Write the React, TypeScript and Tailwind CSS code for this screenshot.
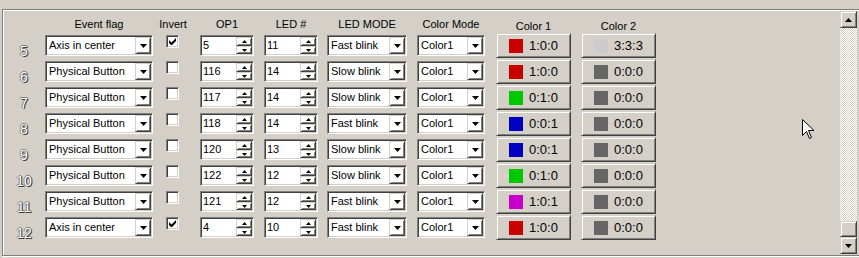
import React from 'react'

type Row = {
  n: number
  flag: string
  inv: boolean
  op1: string
  led: string
  mode: string
  c1: [string, string]
  c2: [string, string]
}

const RED = '#c80000'
const GRN = '#00c800'
const BLU = '#0000c0'
const MAG = '#c800c8'
const GRY = '#666666'

const rows: Row[] = [
  { n: 5, flag: 'Axis in center', inv: true, op1: '5', led: '11', mode: 'Fast blink', c1: [RED, '1:0:0'], c2: ['#cccccc', '3:3:3'] },
  { n: 6, flag: 'Physical Button', inv: false, op1: '116', led: '14', mode: 'Slow blink', c1: [RED, '1:0:0'], c2: [GRY, '0:0:0'] },
  { n: 7, flag: 'Physical Button', inv: false, op1: '117', led: '14', mode: 'Slow blink', c1: [GRN, '0:1:0'], c2: [GRY, '0:0:0'] },
  { n: 8, flag: 'Physical Button', inv: false, op1: '118', led: '14', mode: 'Fast blink', c1: [BLU, '0:0:1'], c2: [GRY, '0:0:0'] },
  { n: 9, flag: 'Physical Button', inv: false, op1: '120', led: '13', mode: 'Slow blink', c1: [BLU, '0:0:1'], c2: [GRY, '0:0:0'] },
  { n: 10, flag: 'Physical Button', inv: false, op1: '122', led: '12', mode: 'Slow blink', c1: [GRN, '0:1:0'], c2: [GRY, '0:0:0'] },
  { n: 11, flag: 'Physical Button', inv: false, op1: '121', led: '12', mode: 'Fast blink', c1: [MAG, '1:0:1'], c2: [GRY, '0:0:0'] },
  { n: 12, flag: 'Axis in center', inv: true, op1: '4', led: '10', mode: 'Fast blink', c1: [RED, '1:0:0'], c2: [GRY, '0:0:0'] },
]

const sunken =
  'border border-t-[#808080] border-l-[#808080] border-b-white border-r-white shadow-[inset_1px_1px_0_#404040,inset_-1px_-1px_0_#d4d0c8]'
const raised =
  'border border-t-[#d4d0c8] border-l-[#d4d0c8] border-b-[#404040] border-r-[#404040] shadow-[inset_1px_1px_0_#fff,inset_-1px_-1px_0_#808080]'

function Down() {
  return (
    <svg width="7" height="4" viewBox="0 0 7 4">
      <path d="M0 0h7L3.5 4z" fill="#000" />
    </svg>
  )
}

function Up() {
  return (
    <svg width="7" height="4" viewBox="0 0 7 4">
      <path d="M3.5 0L7 4H0z" fill="#000" />
    </svg>
  )
}

function Combo({ w, value }: { w: string; value: string }) {
  return (
    <div className={`${sunken} ${w} h-[21px] bg-white flex items-stretch`}>
      <div className="flex-1 pl-[3px] pt-[3px] leading-[13px] truncate">{value}</div>
      <div className={`${raised} w-[16px] my-[1px] mr-[1px] flex items-center justify-center`}>
        <Down />
      </div>
    </div>
  )
}

function Spin({ value }: { value: string }) {
  return (
    <div className={`${sunken} w-[54px] h-[21px] bg-white flex items-stretch`}>
      <div className="flex-1 pl-[2px] pt-[3px] leading-[13px]">{value}</div>
      <div className="w-[16px] my-[1px] mr-[1px] flex flex-col">
        <div className={`${raised} h-[9px] flex items-center justify-center`}>
          <svg width="5" height="3" viewBox="0 0 5 3">
            <path d="M2.5 0L5 3H0z" fill="#000" />
          </svg>
        </div>
        <div className={`${raised} flex-1 flex items-center justify-center`}>
          <svg width="5" height="3" viewBox="0 0 5 3">
            <path d="M0 0h5L2.5 3z" fill="#000" />
          </svg>
        </div>
      </div>
    </div>
  )
}

function Check({ on }: { on: boolean }) {
  return (
    <div className={`${sunken} w-[13px] h-[13px] bg-white flex items-center justify-center`}>
      {on && (
        <svg width="7" height="7" viewBox="0 0 7 7">
          <path d="M0 2v3l2 2h1l4-4V0L2.5 4.5z" fill="#000" />
        </svg>
      )}
    </div>
  )
}

function ColorBtn({ c }: { c: [string, string] }) {
  return (
    <div className={`${raised} w-[75px] h-[25px] flex items-center justify-center gap-[6px] text-[13px]`}>
      <span className="w-[14px] h-[14px]" style={{ backgroundColor: c[0] }} />
      <span>{c[1]}</span>
    </div>
  )
}

export default function App() {
  return (
    <div
      className="relative w-[859px] h-[258px] bg-[#d4d0c8] overflow-hidden text-[11px] text-black"
      style={{ fontFamily: '"Liberation Sans", Arial, sans-serif' }}
    >
      <div className="mt-[9px] ml-[2px] h-[247px] border-t border-l border-b border-[#808080] shadow-[inset_1px_1px_0_#fff,0_1px_0_#fff] flex">
        <div className="flex-1 pt-[1px]">
          <div className="flex h-[22px] pt-[7px] leading-[13px]">
            <div className="w-[42px]" />
            <div className="w-[108px] text-center">Event flag</div>
            <div className="w-[44px] text-center -ml-[2px]">Invert</div>
            <div className="w-[54px] ml-[5px] text-center">OP1</div>
            <div className="w-[54px] ml-[10px] text-center">LED #</div>
            <div className="w-[80px] ml-[9px] text-center">LED MODE</div>
            <div className="w-[68px] ml-[10px] text-center">Color Mode</div>
            <div className="w-[75px] ml-[11px] text-center pt-[2px]">Color 1</div>
            <div className="w-[75px] ml-[10px] text-center pt-[2px]">Color 2</div>
          </div>
          {rows.map((r) => (
            <div key={r.n} className="flex h-[26px] items-start">
              <div className="w-[42px] h-full text-center text-[14px] pt-[11px] leading-[14px] text-white [text-shadow:1px_1px_0_#404040,-1px_0_0_#808080,0_-1px_0_#808080,1px_0_0_#606060]">
                {r.n}
              </div>
              <div className="mt-[2px]">
                <Combo w="w-[108px]" value={r.flag} />
              </div>
              <div className="ml-[13px] mt-[2px]">
                <Check on={r.inv} />
              </div>
              <div className="ml-[21px] mt-[2px]">
                <Spin value={r.op1} />
              </div>
              <div className="ml-[10px] mt-[2px]">
                <Spin value={r.led} />
              </div>
              <div className="ml-[9px] mt-[2px]">
                <Combo w="w-[80px]" value={r.mode} />
              </div>
              <div className="ml-[10px] mt-[2px]">
                <Combo w="w-[68px]" value="Color1" />
              </div>
              <div className="ml-[11px]">
                <ColorBtn c={r.c1} />
              </div>
              <div className="ml-[10px]">
                <ColorBtn c={r.c2} />
              </div>
            </div>
          ))}
        </div>
        <div className="w-[17px] mr-[2px] mt-[1px] mb-[1px] flex flex-col">
          <div className={`${raised} h-[17px] flex items-center justify-center`}>
            <Up />
          </div>
          <div className="flex-1 bg-[repeating-conic-gradient(#ffffff_0_25%,#d4d0c8_0_50%)] bg-[length:2px_2px] flex flex-col justify-end">
            <div className={`${raised} h-[16px] bg-[#d4d0c8]`} />
          </div>
          <div className={`${raised} h-[17px] flex items-center justify-center`}>
            <Down />
          </div>
        </div>
      </div>
      <svg className="absolute left-[802px] top-[119px]" width="13" height="21" viewBox="0 0 13 21">
        <path d="M0.5 0.5v16l4-4 3 7 2-1-3-7h5.5z" fill="#fff" stroke="#000" strokeWidth="1" />
      </svg>
    </div>
  )
}
